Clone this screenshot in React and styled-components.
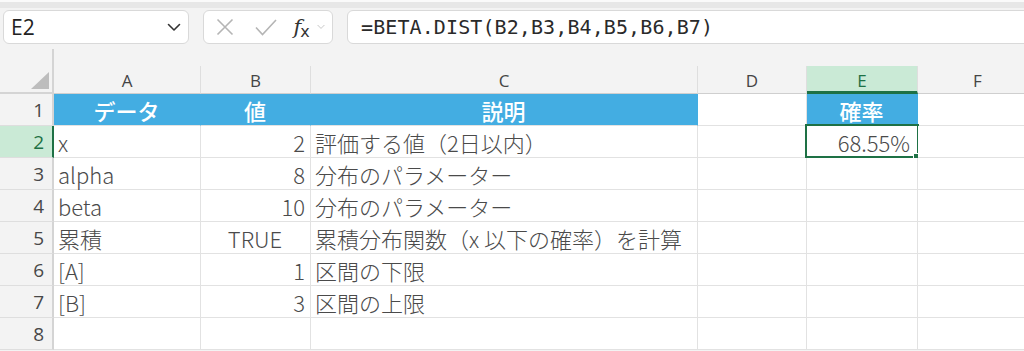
import React from 'react'
import styled, { createGlobalStyle, css } from 'styled-components'

const GREEN = '#1e7145'
const GREEN_LIGHT = '#caead6'
const BLUE = '#43ade2'
const GRID = '#e2e2e2'

const GlobalStyle = createGlobalStyle`
  body {
    margin: 0;
    background: #f3f3f3;
    font-family: "Noto Sans CJK JP", "Noto Sans", sans-serif;
  }
`

//#region styles
const Page = styled.div`
  width: 1024px;
  height: 351px;
  overflow: hidden;
  background: #f3f3f3;
`
const FormulaBar = styled.div`
  display: flex;
  align-items: flex-start;
  gap: 14px;
  height: 49px;
  padding: 8px 0 0 3px;
  box-sizing: border-box;
  border-top: 2px solid #fafafa;
  background: linear-gradient(#e7e7e7 0, #e7e7e7 6px, #f3f3f3 6px);
`
const Box = styled.div`
  display: flex;
  align-items: center;
  height: 34px;
  box-sizing: border-box;
  background: #fff;
  border: 1px solid #d9d9d9;
  border-radius: 6px;
`
const NameBox = styled(Box)`
  width: 186px;
  padding: 0 7px 0 7px;
  justify-content: space-between;
  font-family: "Open Sans", "Noto Sans", sans-serif;
  font-size: 21px;
  color: #222;
`
const ButtonGroup = styled(Box)`
  width: 130px;
  padding: 0 6px 0 11px;
`
const IconSlot = styled.span`
  display: flex;
  align-items: center;
  justify-content: center;
  width: ${(p) => p.$w}px;
  margin-left: ${(p) => p.$gap || 0}px;
`
const Fx = styled.span`
  font-family: "DejaVu Serif", "Liberation Serif", serif;
  font-style: italic;
  font-size: 21px;
  line-height: 1;
  color: #333;

  span {
    font-style: normal;
    font-family: "DejaVu Sans", sans-serif;
    font-size: 16px;
    position: relative;
    top: 3px;
    margin-left: -1px;
  }
`
const FormulaInput = styled(Box)`
  flex: 1;
  margin-right: -12px;
  padding-left: 13px;
  font-family: "DejaVu Sans Mono", "Liberation Mono", monospace;
  font-size: 20px;
  letter-spacing: 0.1px;
  color: #2a2a2a;
`
const Sheet = styled.div`
  display: grid;
  grid-template-columns: 54px 147px 110px 387px 109px 111px 120px;
  grid-template-rows: 17px 28px repeat(8, 32px);
`
const Corner = styled.div`
  grid-row: span 2;
  box-sizing: border-box;
  border-right: 2px solid #d4d4d4;
  border-bottom: 2px solid #d4d4d4;
  display: flex;
  align-items: flex-end;
  justify-content: flex-end;
  padding: 0 3px 3px 0;

  &::after {
    content: '';
    width: 18px;
    height: 17px;
    background: #bdbdbd;
    clip-path: polygon(100% 0, 100% 100%, 0 100%);
  }
`
const Spacer = styled.div`
  grid-column: 2 / -1;
`
const ColHead = styled.div`
  display: flex;
  align-items: center;
  justify-content: center;
  box-sizing: border-box;
  border-right: 1px solid #dedede;
  border-bottom: 1px solid #cfcfcf;
  font-family: "Open Sans", "Noto Sans", sans-serif;
  font-size: 17px;
  color: #444;
  padding-top: 1px;

  ${(p) =>
    p.$active &&
    css`
      background: ${GREEN_LIGHT};
      color: ${GREEN};
      border-bottom: 3px solid ${GREEN};
      padding-top: 3px;
    `}
`
const RowHead = styled.div`
  display: flex;
  align-items: center;
  justify-content: flex-end;
  padding-right: 8px;
  box-sizing: border-box;
  border-right: 2px solid #d4d4d4;
  border-bottom: 1px solid #dedede;
  font-family: "Open Sans", "Noto Sans", sans-serif;
  font-size: 19px;
  color: #484848;

  ${(p) =>
    p.$active &&
    css`
      background: ${GREEN_LIGHT};
      color: ${GREEN};
      border-right-color: ${GREEN};
    `}
`
const Cell = styled.div`
  position: relative;
  display: flex;
  align-items: center;
  justify-content: ${(p) =>
    p.$align === 'right' ? 'flex-end' : p.$align === 'center' ? 'center' : 'flex-start'};
  padding: 1px 5px 0 4px;
  box-sizing: border-box;
  white-space: nowrap;
  background: #fff;
  border-right: 1px solid ${GRID};
  border-bottom: 1px solid ${GRID};
  font-size: 22px;
  font-weight: 300;
  color: #4a4a4a;

  ${(p) =>
    p.$head &&
    css`
      background: ${BLUE};
      border-right-color: ${BLUE};
      color: #fff;
      font-weight: 500;
    `}

  ${(p) =>
    p.$selected &&
    css`
      padding-right: 7px;
      &::before {
        content: '';
        position: absolute;
        inset: -2px -2px -1px -2px;
        border: 2px solid ${GREEN};
        pointer-events: none;
      }
      &::after {
        content: '';
        position: absolute;
        right: -3px;
        bottom: -3px;
        width: 6px;
        height: 6px;
        background: ${GREEN};
        border-left: 1px solid #fff;
        border-top: 1px solid #fff;
      }
    `}
`
//#endregion

const columns = ['A', 'B', 'C', 'D', 'E', 'F']

const rows = [
  { a: 'データ', b: '値', c: '説明', e: '確率', head: true },
  { a: 'x', b: '2', c: '評価する値（2日以内）', e: '68.55%' },
  { a: 'alpha', b: '8', c: '分布のパラメーター' },
  { a: 'beta', b: '10', c: '分布のパラメーター' },
  { a: '累積', b: 'TRUE', c: '累積分布関数（x 以下の確率）を計算', bAlign: 'center' },
  { a: '[A]', b: '1', c: '区間の下限' },
  { a: '[B]', b: '3', c: '区間の上限' },
  {},
]

function Chevron({ size = 14, color = '#333', stroke = 1.6 }) {
  return (
    <svg width={size} height={size / 2 + 2} viewBox="0 0 14 9" fill="none">
      <path d="M1.5 1.5 L7 7 L12.5 1.5" stroke={color} strokeWidth={stroke} strokeLinecap="round" strokeLinejoin="round" />
    </svg>
  )
}

function App() {
  return (
    <Page>
      <GlobalStyle />
      <FormulaBar>
        <NameBox>
          <span>E2</span>
          <Chevron />
        </NameBox>
        <ButtonGroup>
          <IconSlot $w={20}>
            <svg width="18" height="18" viewBox="0 0 18 18" fill="none">
              <path d="M1.5 1.5 L16.5 16.5 M16.5 1.5 L1.5 16.5" stroke="#b5b5b5" strokeWidth="1.6" />
            </svg>
          </IconSlot>
          <IconSlot $w={24} $gap={20}>
            <svg width="22" height="17" viewBox="0 0 22 17" fill="none">
              <path d="M1 8.5 L7.5 15.5 L21 1" stroke="#b5b5b5" strokeWidth="1.6" />
            </svg>
          </IconSlot>
          <IconSlot $w={22} $gap={13}>
            <Fx>
              f<span>x</span>
            </Fx>
          </IconSlot>
          <IconSlot $w={10} $gap={4}>
            <Chevron size={8} color="#b5b5b5" stroke={1.3} />
          </IconSlot>
        </ButtonGroup>
        <FormulaInput>=BETA.DIST(B2,B3,B4,B5,B6,B7)</FormulaInput>
      </FormulaBar>

      <Sheet>
        <Corner />
        <Spacer />
        {columns.map((c) => (
          <ColHead key={c} $active={c === 'E'}>
            {c}
          </ColHead>
        ))}
        {rows.map((r, i) => (
          <React.Fragment key={i}>
            <RowHead $active={i === 1}>{i + 1}</RowHead>
            <Cell $head={r.head} $align={r.head ? 'center' : 'left'}>
              {r.a}
            </Cell>
            <Cell $head={r.head} $align={r.head ? 'center' : r.bAlign || 'right'}>
              {r.b}
            </Cell>
            <Cell $head={r.head} $align={r.head ? 'center' : 'left'}>
              {r.c}
            </Cell>
            <Cell />
            <Cell $head={r.head} $align={r.head ? 'center' : 'right'} $selected={i === 1}>
              {r.e}
            </Cell>
            <Cell />
          </React.Fragment>
        ))}
      </Sheet>
    </Page>
  )
}

export default App
